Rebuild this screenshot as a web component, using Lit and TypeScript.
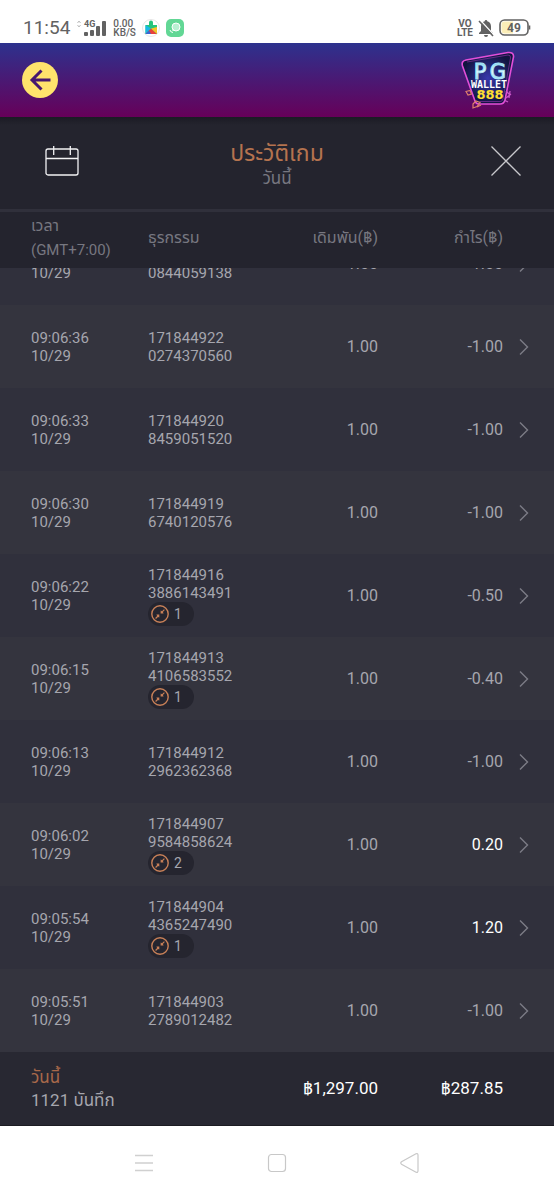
import { LitElement, html, svg, css, nothing } from "lit";
import { customElement, property } from "lit/decorators.js";
import { classMap } from "lit/directives/class-map.js";

interface GameRecord {
  time: string;
  date: string;
  id: [string, string];
  bet: string;
  profit: string;
  cascades?: number;
}

const DATE = "10/29";
const RECORDS: GameRecord[] = [
  { time: "09:06:39", date: DATE, id: ["171844924", "0844059138"], bet: "1.00", profit: "-1.00" },
  { time: "09:06:36", date: DATE, id: ["171844922", "0274370560"], bet: "1.00", profit: "-1.00" },
  { time: "09:06:33", date: DATE, id: ["171844920", "8459051520"], bet: "1.00", profit: "-1.00" },
  { time: "09:06:30", date: DATE, id: ["171844919", "6740120576"], bet: "1.00", profit: "-1.00" },
  { time: "09:06:22", date: DATE, id: ["171844916", "3886143491"], bet: "1.00", profit: "-0.50", cascades: 1 },
  { time: "09:06:15", date: DATE, id: ["171844913", "4106583552"], bet: "1.00", profit: "-0.40", cascades: 1 },
  { time: "09:06:13", date: DATE, id: ["171844912", "2962362368"], bet: "1.00", profit: "-1.00" },
  { time: "09:06:02", date: DATE, id: ["171844907", "9584858624"], bet: "1.00", profit: "0.20", cascades: 2 },
  { time: "09:05:54", date: DATE, id: ["171844904", "4365247490"], bet: "1.00", profit: "1.20", cascades: 1 },
  { time: "09:05:51", date: DATE, id: ["171844903", "2789012482"], bet: "1.00", profit: "-1.00" },
];

const buttonReset = css`
  button {
    appearance: none;
    border: 0;
    padding: 0;
    margin: 0;
    background: none;
    color: inherit;
    font: inherit;
    cursor: pointer;
    display: flex;
    align-items: center;
    justify-content: center;
  }
  svg {
    display: block;
  }
`;

@customElement("status-bar")
class StatusBar extends LitElement {
  static styles = css`
    :host {
      display: flex;
      align-items: center;
      justify-content: space-between;
      height: 43px;
      padding: 12px 23px 0;
      box-sizing: border-box;
      background: #fff;
      color: #626262;
    }
    .group {
      display: flex;
      align-items: center;
    }
    .left {
      gap: 6px;
    }
    .right {
      gap: 5px;
    }
    .clock {
      font-size: 19px;
      line-height: 24px;
    }
    .stack {
      display: flex;
      flex-direction: column;
      font-size: 10px;
      line-height: 9px;
      font-weight: 500;
    }
    .bold {
      font-weight: 700;
      text-align: center;
    }
    svg {
      display: block;
    }
  `;

  render() {
    return html`
      <div class="group left">
        <span class="clock">11:54</span>
        <svg width="31" height="18" viewBox="0 0 31 18" fill="#626262">
          <path d="M1.500 4 3 2 4.500 4M1.500 6 3 8 4.500 6" fill="none" stroke="#bbb" />
          <text x="8" y="8" font-size="9" font-weight="700" font-family="Roboto, sans-serif">4G</text>
          <rect x="8" y="13" width="4" height="4" rx="1" />
          <rect x="14" y="11" width="4" height="6" rx="1" />
          <rect x="20" y="7" width="4" height="10" rx="1" />
          <rect x="26" y="2" width="4" height="15" rx="1" />
        </svg>
        <span class="stack"><span>0.00</span><span>KB/S</span></span>
        <svg width="42" height="18" viewBox="0 0 42 18">
          <circle cx="9" cy="9" r="8.500" fill="#fff" stroke="#e6e6e6" />
          <path d="M3.500 6H7V3.600A2 2 0 0 1 11 3.600V6h4v9H3.500Z" fill="#25c47b" />
          <path d="M3.500 6 9 9.500 3.500 15Z" fill="#18b9e8" />
          <path d="M9 9.500 15 15H3.500Z" fill="#e8413c" />
          <path d="M9 9.500 15 8v7Z" fill="#f7c325" />
          <path d="M3.500 15 7 11.500 9 15Z" fill="#3867d6" />
          <rect x="24" y="0" width="18" height="18" rx="5" fill="#62d795" />
          <circle cx="34" cy="8" r="4" fill="#b9f0d2" stroke="#fff" />
          <path d="M28 11q0 2 3 2.500M30.500 11.500l1.500-1" fill="none" stroke="#fff" />
        </svg>
      </div>
      <div class="group right">
        <span class="stack bold"><span>VO</span><span>LTE</span></span>
        <svg width="16" height="18" viewBox="0 0 16 18">
          <path d="M8 1a1.300 1.300 0 0 1 1.300 1.200C12 3 13 5 13 7.500V12l2 2v1H1v-1l2-2V7.500C3 5 4 3 6.700 2.200A1.300 1.300 0 0 1 8 1ZM6 16h4a2 2 0 0 1-4 0Z" fill="#626262" />
          <path d="M2.500 1.500 16 16" stroke="#fff" stroke-width="1.500" />
          <path d="M1 2 15 17" stroke="#626262" stroke-width="1.600" />
        </svg>
        <svg width="32" height="17" viewBox="0 0 32 17">
          <rect x="1" y="1" width="28" height="15" rx="4.500" fill="#fff" stroke="#626262" stroke-width="1.600" />
          <path d="M5.500 2.500H14v12H5.500a3 3 0 0 1-3-3v-6a3 3 0 0 1 3-3Z" fill="#fbeeb8" />
          <path d="M30.500 6.500v4" stroke="#626262" stroke-width="1.600" />
          <text x="15" y="13" font-size="12" font-weight="700" text-anchor="middle" fill="#626262" font-family="Roboto, sans-serif">49</text>
        </svg>
      </div>
    `;
  }
}

@customElement("brand-header")
class BrandHeader extends LitElement {
  static styles = [
    buttonReset,
    css`
      :host {
        display: flex;
        align-items: center;
        justify-content: space-between;
        height: 74px;
        padding: 0 39px 0 22px;
        box-sizing: border-box;
        background: linear-gradient(#2d328e, #670059);
      }
      .back {
        width: 36px;
        height: 36px;
        border-radius: 50%;
        background: #ffe36c;
      }
    `,
  ];

  render() {
    return html`
      <button class="back" aria-label="ย้อนกลับ">
        <svg width="24" height="24" viewBox="0 0 24 24" fill="none" stroke="#46186f" stroke-width="3">
          <path d="M22.500 12H4M13.500 2.500 4 12l9.500 9.500" />
        </svg>
      </button>
      <svg width="54" height="58" viewBox="0 0 54 58" role="img" aria-label="PG Wallet 888">
        <defs>
          <radialGradient id="panel"><stop stop-color="#3838ac" /><stop offset="1" stop-color="#11143f" /></radialGradient>
          <linearGradient id="ice" x2="0" y2="1"><stop stop-color="#58c8f0" /><stop offset=".5" stop-color="#f0ffff" /><stop offset="1" stop-color="#5cc8f2" /></linearGradient>
        </defs>
        <path d="M5 9 47 1.500Q53 1 52.500 6L44 49Q43 53 39 53H18Q15 53 14 50L1.500 15Q0 10 5 9Z" fill="url(#panel)" stroke="#e24fd8" stroke-width="1.600" />
        <path d="M6 11 47 4Q50 4 49.500 7L42 48Q41.500 50.500 39 50.500H18.500" fill="none" stroke="#82309f" stroke-width=".7" />
        <g font-family="DejaVu Sans Mono, monospace" font-weight="700" text-anchor="middle">
          <g font-size="21" font-weight="400" font-family="DejaVu Sans, sans-serif" fill="url(#ice)" stroke="#a8e4f6">
            <text x="19" y="28">P</text>
            <text x="37" y="28">G</text>
          </g>
          <text x="28" y="37" font-size="10" fill="#fff">WALLET</text>
          <text x="29" y="48" font-size="13" font-family="DejaVu Sans, sans-serif" fill="#ffdf31">888</text>
        </g>
        <g fill="none" stroke="#e0806c" stroke-width="1.200">
          <path d="M5 40.500 9 39.500 10.500 43 7 44ZM12 53l3-3 4 1.500-3 4-4 1.500ZM16 56l4-2" />
        </g>
        <path d="m45 40 4 4m-4 3 5-4m-1-3-1 7m-5 2 4 2" fill="none" stroke="#c956c9" stroke-width="1.300" />
      </svg>
    `;
  }
}

@customElement("history-title")
class HistoryTitle extends LitElement {
  static styles = [
    buttonReset,
    css`
      :host {
        display: grid;
        grid-template-columns: 36px 1fr 36px;
        align-items: center;
        height: 95px;
        padding: 0 30px 4px 44px;
        box-sizing: border-box;
        background: linear-gradient(#1b1b24, #24242e 8px);
        border-bottom: 3px solid #30303b;
      }
      .heading {
        text-align: center;
        padding: 8px 14px 0 0;
      }
      h1,
      p {
        margin: 0;
        font-weight: 400;
      }
      h1 {
        color: #b5734f;
        font-size: 23px;
        line-height: 26px;
      }
      p {
        color: #777780;
        font-size: 17px;
        line-height: 22px;
      }
    `,
  ];

  render() {
    return html`
      <button aria-label="เลือกวันที่">
        <svg width="36" height="32" viewBox="0 0 36 32" fill="none" stroke="#f2f2f4" stroke-width="1.300">
          <rect x="2" y="4" width="32" height="26" rx="2" />
          <path d="M2 13.500H34M9.700 1v9M26.300 1v9" />
        </svg>
      </button>
      <div class="heading">
        <h1>ประวัติเกม</h1>
        <p>วันนี้</p>
      </div>
      <button aria-label="ปิด">
        <svg width="32" height="32" viewBox="0 0 32 32" fill="none" stroke="#c8c8cc" stroke-width="1.300">
          <path d="m1.500 1.500 29 29m0-29-29 29" />
        </svg>
      </button>
    `;
  }
}

@customElement("history-table")
class HistoryTable extends LitElement {
  @property({ attribute: false }) records: GameRecord[] = [];

  static styles = [
    buttonReset,
    css`
      :host {
        display: flex;
        flex: 1;
        min-height: 0;
      }
      table {
        flex: 1;
        display: flex;
        flex-direction: column;
        min-height: 0;
        font-size: 16px;
        color: #a6a6ae;
      }
      thead,
      tfoot {
        display: block;
        flex: none;
      }
      tbody {
        display: flex;
        flex-direction: column;
        justify-content: flex-end;
        flex: 1;
        min-height: 0;
        overflow: hidden;
      }
      tr {
        display: grid;
        grid-template-columns: 117fr 100fr 130fr 125fr 27fr;
        align-items: center;
        padding: 0 24px 0 31px;
        flex: none;
      }
      th,
      td {
        display: block;
        padding: 0;
        font-weight: 400;
        text-align: left;
        white-space: nowrap;
      }
      thead tr {
        height: 56px;
        background: #24242e;
        color: #777780;
        line-height: 25px;
      }
      thead th {
        padding-bottom: 5px;
      }
      thead .zone {
        font-size: 15px;
      }
      tbody tr {
        height: 83px;
        background: #34343e;
        line-height: 18px;
      }
      tbody tr:nth-child(odd) {
        background: #30303c;
      }
      tbody .line {
        font-size: 15px;
      }
      .line {
        display: block;
      }
      .amount {
        text-align: right;
      }
      .win {
        color: #fff;
      }
      .badge {
        display: flex;
        align-items: center;
        gap: 5px;
        width: 46px;
        height: 24px;
        padding-left: 3px;
        box-sizing: border-box;
        border-radius: 12px;
        background: #25252f;
        font-size: 14px;
      }
      .open {
        width: 12px;
        height: 24px;
        margin-left: auto;
      }
      tfoot tr {
        height: 74px;
        background: #282832;
        border-bottom: 1px solid #1c1c22;
        box-sizing: border-box;
        line-height: 23px;
        font-size: 17px;
      }
      tfoot .amount {
        color: #fff;
      }
      .range {
        color: #a8694a;
      }
      .summary {
        grid-column: span 2;
      }
    `,
  ];

  private badge(count: number) {
    return html`<span class="badge">
      <svg width="18" height="18" viewBox="0 0 18 18">
        <circle cx="9" cy="9" r="8.200" fill="none" stroke="#c88058" stroke-width="1.400" />
        <g fill="#c88058">
          ${svg`<path d="M9.700 5.500 11 6.300 13 4.300 13.800 5.100 11.900 7.100 12.600 8.400 9.600 8.400ZM8.300 9.600V12.600L7 11.900 5 13.900 4.200 13.100 6.100 11.100 5.400 9.600Z" />`}
        </g>
      </svg>
      ${count}
    </span>`;
  }

  render() {
    return html`
      <table>
        <thead>
          <tr>
            <th scope="col"><span class="line">เวลา</span><span class="line zone">(GMT+7:00)</span></th>
            <th scope="col">ธุรกรรม</th>
            <th class="amount" scope="col">เดิมพัน(฿)</th>
            <th class="amount" scope="col">กำไร(฿)</th>
          </tr>
        </thead>
        <tbody>
          ${this.records.map(
            (r) => html`<tr>
              <td><span class="line">${r.time}</span><span class="line">${r.date}</span></td>
              <td>
                <span class="line">${r.id[0]}</span><span class="line">${r.id[1]}</span>
                ${r.cascades ? this.badge(r.cascades) : nothing}
              </td>
              <td class="amount">${r.bet}</td>
              <td class=${classMap({ amount: true, win: !r.profit.startsWith("-") })}>${r.profit}</td>
              <td>
                <button class="open" aria-label="รายละเอียด">
                  <svg width="12" height="18" viewBox="0 0 12 18" fill="none" stroke="#7c7c86" stroke-width="1.400">
                    <path d="M2 1.500 9.500 9 2 16.500" />
                  </svg>
                </button>
              </td>
            </tr>`
          )}
        </tbody>
        <tfoot>
          <tr>
            <td class="summary"><span class="line range">วันนี้</span><span class="line">1121 บันทึก</span></td>
            <td class="amount">฿1,297.00</td>
            <td class="amount">฿287.85</td>
          </tr>
        </tfoot>
      </table>
    `;
  }
}

@customElement("system-nav")
class SystemNav extends LitElement {
  static styles = [
    buttonReset,
    css`
      :host {
        display: flex;
        justify-content: center;
        align-items: center;
        height: 74px;
        background: #fff;
      }
      button {
        width: 22px;
        height: 22px;
      }
      .items {
        display: flex;
        justify-content: space-between;
        width: 52%;
      }
    `,
  ];

  render() {
    return html`
      <div class="items">
        <button aria-label="เมนู">
          <svg width="20" height="20" viewBox="0 0 20 20" stroke="#d0d0d0" stroke-width="1.300"><path d="M1 2.500h18M1 10h18M1 17.500h18" /></svg>
        </button>
        <button aria-label="หน้าหลัก">
          <svg width="20" height="20" viewBox="0 0 20 20" fill="none" stroke="#c8c8c8" stroke-width="1.200"><rect x="1.500" y="1.500" width="17" height="17" rx="3" /></svg>
        </button>
        <button aria-label="กลับ">
          <svg width="20" height="20" viewBox="0 0 20 20" fill="none" stroke="#c8c8c8" stroke-width="1.200"><path d="M16 .8 1.500 8.800q-1.500 1.200 0 2.400L16 19.200q2 .6 2-1.400V2.200Q18 .2 16 .8Z" /></svg>
        </button>
      </div>
    `;
  }
}

@customElement("app-root")
class AppRoot extends LitElement {
  static styles = css`
    :host {
      display: flex;
      flex-direction: column;
      height: 100vh;
      background: #24242e;
      font-family: Roboto, "Noto Sans Thai", "Noto Sans", sans-serif;
    }
  `;

  render() {
    return html`
      <status-bar></status-bar>
      <brand-header></brand-header>
      <history-title></history-title>
      <history-table .records=${RECORDS}></history-table>
      <system-nav></system-nav>
    `;
  }
}
